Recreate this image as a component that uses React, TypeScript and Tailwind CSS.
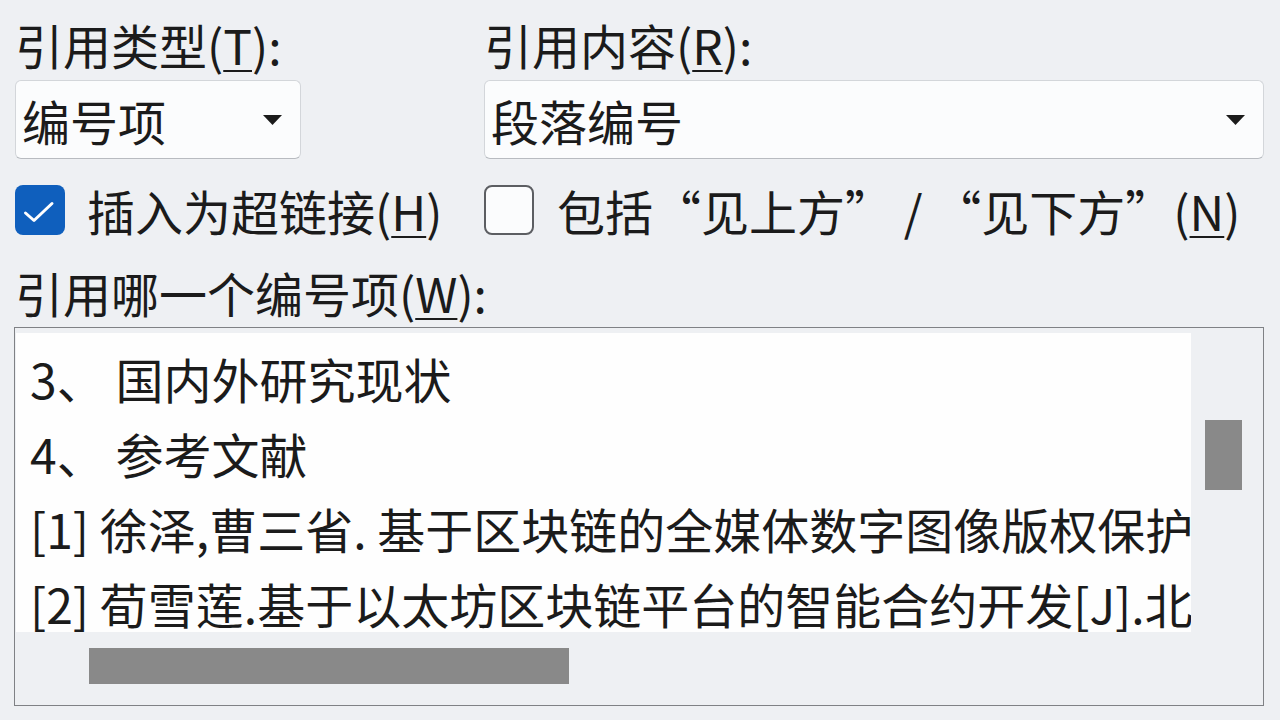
import React from 'react';

const Caret = () => (
  <svg width="19" height="10" viewBox="0 0 19 10" className="shrink-0">
    <path d="M0 0 L19 0 L9.5 10 Z" fill="#1b1b1b" />
  </svg>
);

function Select({ value, width }: { value: string; width: string }) {
  return (
    <div
      className={`${width} mt-[12px] h-[79px] rounded-[6px] border border-[#d3d6da] border-b-[#b8bbc0] bg-[#fbfcfd] flex items-center justify-between pl-[6px] pr-[18px]`}
    >
      <span className="leading-[48px]">{value}</span>
      <Caret />
    </div>
  );
}

const Key = ({ k }: { k: string }) => (
  <span className="underline decoration-2 underline-offset-[5px]">{k}</span>
);

const items = [
  '3、 国内外研究现状',
  '4、 参考文献',
  '[1] 徐泽,曹三省. 基于区块链的全媒体数字图像版权保护技',
  '[2] 荀雪莲.基于以太坊区块链平台的智能合约开发[J].北华',
];

export default function App() {
  return (
    <div className="w-[1280px] h-[720px] overflow-hidden bg-[#eef0f3] text-[#1b1b1b] font-['Noto_Sans_CJK_SC','Noto_Sans',sans-serif] text-[48px] pl-[15px] pt-[20px]">
      {/* type / content selects */}
      <div className="flex gap-[183px]">
        <div className="w-[286px]">
          <div className="h-[48px] leading-[48px] whitespace-nowrap">
            引用类型(<Key k="T" />):
          </div>
          <Select value="编号项" width="w-[286px]" />
        </div>
        <div className="w-[780px]">
          <div className="h-[48px] leading-[48px] whitespace-nowrap">
            引用内容(<Key k="R" />):
          </div>
          <Select value="段落编号" width="w-[780px]" />
        </div>
      </div>

      {/* checkboxes */}
      <div className="mt-[26px] h-[50px] flex items-center">
        <div className="w-[469px] flex items-center gap-[22px]">
          <div className="w-[50px] h-[50px] rounded-[8px] bg-[#0f5fbd] flex items-center justify-center shrink-0">
            <svg width="50" height="50" viewBox="0 0 50 50">
              <path
                d="M10.5 28 L19 35.5 L37 18.5"
                fill="none"
                stroke="#ffffff"
                strokeWidth="3"
                strokeLinecap="round"
                strokeLinejoin="round"
              />
            </svg>
          </div>
          <span className="leading-[48px] whitespace-nowrap">
            插入为超链接(<Key k="H" />)
          </span>
        </div>
        <div className="flex items-center gap-[23px]">
          <div className="w-[50px] h-[50px] rounded-[8px] border-2 border-[#5c5e62] bg-[#fbfcfd] shrink-0" />
          <span className="leading-[48px] whitespace-nowrap">
            包括“见上方” / “见下方”(<Key k="N" />)
          </span>
        </div>
      </div>

      <div className="mt-[33px] h-[48px] leading-[48px] whitespace-nowrap">
        引用哪一个编号项(<Key k="W" />):
      </div>

      {/* numbered item list */}
      <div className="mt-[11px] -ml-[1px] w-[1250px] h-[379px] border border-[#7f8185] bg-[#eef0f3] pt-[5px] pl-[1px]">
        <div className="grid grid-cols-[1175px_72px] grid-rows-[299px_73px]">
          <div className="bg-[#fefefe] overflow-hidden pt-[8px] pl-[14px]">
            {items.map((t) => (
              <div key={t} className="h-[75px] leading-[75px] whitespace-nowrap">
                {t}
              </div>
            ))}
          </div>
          <div className="row-span-2 pl-[14px] pt-[87px]">
            <div className="w-[37px] h-[70px] bg-[#898989]" />
          </div>
          <div className="pl-[73px] pt-[16px]">
            <div className="w-[480px] h-[36px] bg-[#898989]" />
          </div>
        </div>
      </div>
    </div>
  );
}
